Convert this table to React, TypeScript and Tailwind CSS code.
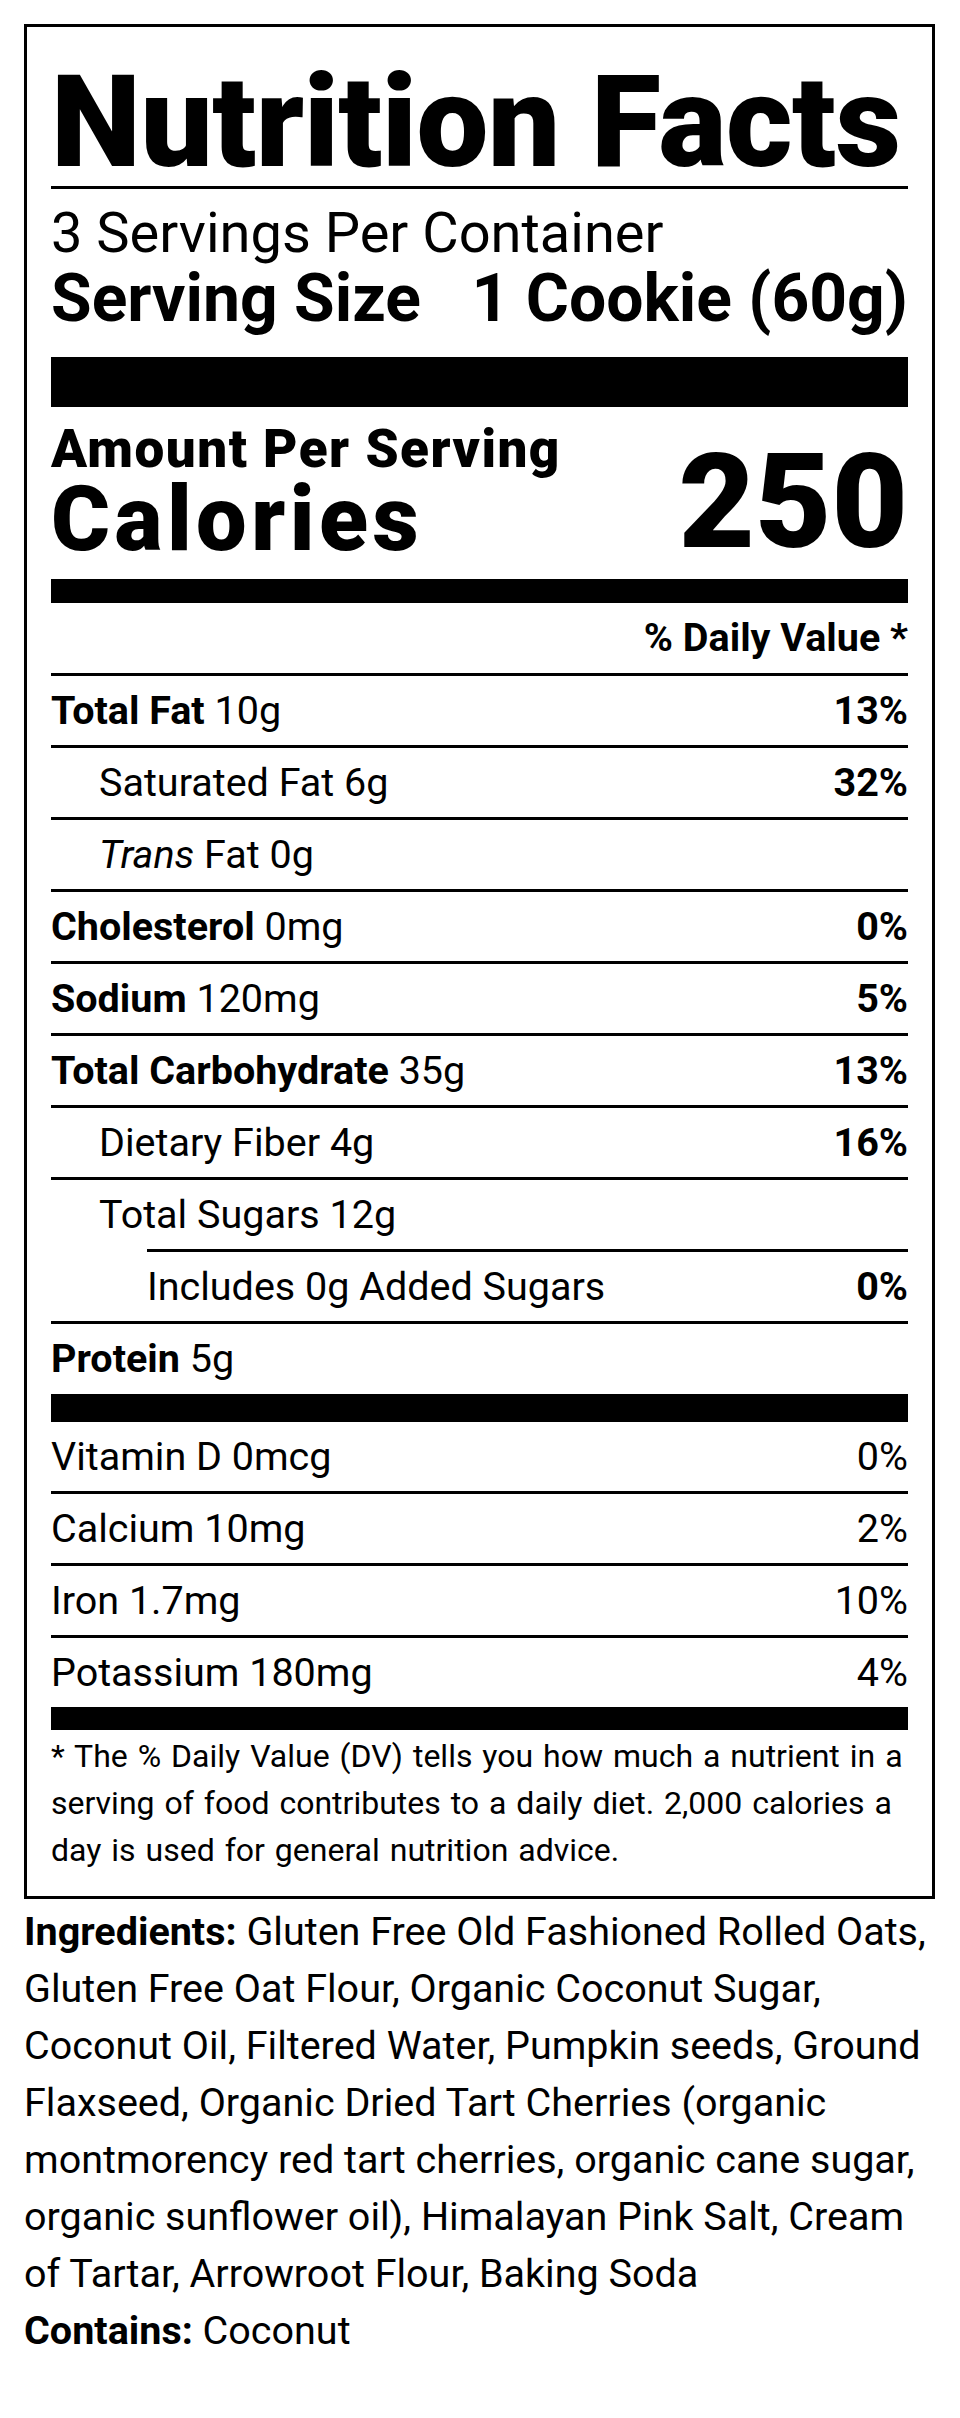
import React from 'react';

type Nutrient = {
  label: string;
  amount: string;
  dv?: string;
  indent?: 0 | 1 | 2;
  bold?: boolean;
  italic?: string;
};

const nutrients: Nutrient[] = [
  { label: 'Total Fat', amount: '10g', dv: '13%', bold: true },
  { label: 'Saturated Fat', amount: '6g', dv: '32%', indent: 1 },
  { label: 'Fat', amount: '0g', indent: 1, italic: 'Trans' },
  { label: 'Cholesterol', amount: '0mg', dv: '0%', bold: true },
  { label: 'Sodium', amount: '120mg', dv: '5%', bold: true },
  { label: 'Total Carbohydrate', amount: '35g', dv: '13%', bold: true },
  { label: 'Dietary Fiber', amount: '4g', dv: '16%', indent: 1 },
  { label: 'Total Sugars', amount: '12g', indent: 1 },
  { label: 'Includes 0g Added Sugars', amount: '', dv: '0%', indent: 2 },
];

const vitamins = [
  { label: 'Vitamin D 0mcg', dv: '0%' },
  { label: 'Calcium 10mg', dv: '2%' },
  { label: 'Iron 1.7mg', dv: '10%' },
  { label: 'Potassium 180mg', dv: '4%' },
];

function Rule({ indent = 0 }: { indent?: number }) {
  return <div className={indent === 2 ? 'ml-[96px] h-[3px] bg-black' : 'h-[3px] bg-black'} />;
}

function NutrientRow({ n }: { n: Nutrient }) {
  const pad = n.indent === 2 ? 'pl-[96px]' : n.indent === 1 ? 'pl-[48px]' : 'pl-0';
  return (
    <div className={`flex h-[69px] items-center justify-between text-[39.5px] leading-[69px] ${pad}`}>
      <span>
        {n.italic && <span className="italic">{n.italic} </span>}
        {n.bold ? <span className="font-bold">{n.label}</span> : <span>{n.label}</span>}
        {n.amount && <span> {n.amount}</span>}
      </span>
      {n.dv && <span className="font-bold">{n.dv}</span>}
    </div>
  );
}

export default function App() {
  return (
    <div className="min-h-screen bg-white pt-[24px] text-black font-['Roboto',sans-serif]">
      <div className="ml-[24px] w-[911px] border-[3px] border-black px-6 pt-[31px] pb-[22px]">
        <h1 className="text-[128px] leading-[128px] font-black tracking-[-0.5px]">Nutrition Facts</h1>
        <div className="h-[3px] bg-black" />

        <div className="pt-[13px]">
          <p className="text-[56px] leading-[62px]">3 Servings Per Container</p>
          <p className="flex text-[66px] leading-[70px] font-bold">
            <span>Serving Size</span>
            <span className="ml-auto">1 Cookie (60g)</span>
          </p>
        </div>

        <div className="mt-[23px] h-[50px] bg-black" />

        <div className="flex items-end justify-between pt-[17px]">
          <div>
            <p className="text-[53px] leading-[50px] font-black tracking-[1.5px]">Amount Per Serving</p>
            <p className="text-[90px] leading-[92px] font-black tracking-[4.5px]">Calories</p>
          </div>
          <p className="text-[132px] leading-[128px] font-black">250</p>
        </div>

        <div className="mt-[13px] h-[24px] bg-black" />

        <p className="text-right text-[39.5px] leading-[70px] font-bold">% Daily Value *</p>
        <Rule />

        {nutrients.map((n, i) => (
          <div key={i}>
            <NutrientRow n={n} />
            <Rule indent={i === 7 ? 2 : 0} />
          </div>
        ))}

        <div className="flex h-[70px] items-center text-[39.5px] leading-[70px]">
          <span className="font-bold">Protein</span>&nbsp;5g
        </div>

        <div className="h-[28px] bg-black" />

        {vitamins.map((v, i) => (
          <div key={v.label}>
            <div className="flex h-[69px] items-center justify-between text-[39.5px] leading-[69px]">
              <span>{v.label}</span>
              <span>{v.dv}</span>
            </div>
            {i < vitamins.length - 1 && <Rule />}
          </div>
        ))}

        <div className="h-[23px] bg-black" />

        <p className="pt-[3px] text-[32px] leading-[47px] [word-spacing:2px]">
          * The % Daily Value (DV) tells you how much a nutrient in a<br />
          serving of food contributes to a daily diet. 2,000 calories a<br />
          day is used for general nutrition advice.
        </p>
      </div>

      <div className="ml-[24px] w-[930px] pt-[4px] text-[39.5px] leading-[57px]">
        <p>
          <span className="font-bold">Ingredients:</span> Gluten Free Old Fashioned Rolled Oats,<br />
          Gluten Free Oat Flour, Organic Coconut Sugar,<br />
          Coconut Oil, Filtered Water, Pumpkin seeds, Ground<br />
          Flaxseed, Organic Dried Tart Cherries (organic<br />
          montmorency red tart cherries, organic cane sugar,<br />
          organic sunflower oil), Himalayan Pink Salt, Cream<br />
          of Tartar, Arrowroot Flour, Baking Soda
        </p>
        <p>
          <span className="font-bold">Contains:</span> Coconut
        </p>
      </div>
    </div>
  );
}
